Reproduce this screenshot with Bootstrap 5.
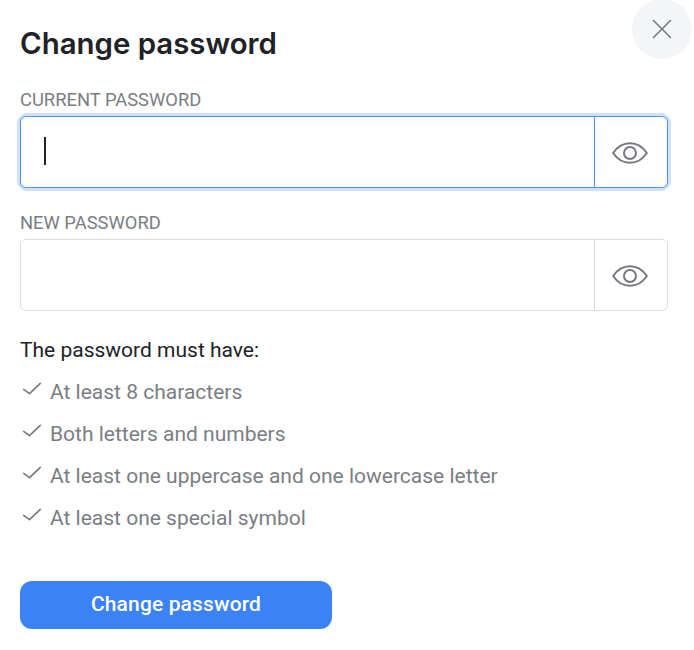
<!DOCTYPE html>
<html lang="en">
<head>
<meta charset="utf-8">
<title>Change password</title>
<link href="https://cdn.jsdelivr.net/npm/bootstrap@5.3.0/dist/css/bootstrap.min.css" rel="stylesheet">
<style>
html, body { height: 100%; }
body { background: #fff; font-family: Roboto, "Liberation Sans", sans-serif; color: #212226; overflow: hidden; }
.sheet { padding: 26px 26px 0 20px; }
.sheet-title { font-family: Inter, Roboto, sans-serif; font-weight: 600; font-size: 29.4px; line-height: 36px; margin: 0 0 28px; color: #212226; }
.close-disc { position: absolute; top: -1px; left: 632px; width: 60px; height: 60px; border-radius: 50%; background: #f4f5f7; border: 0; display: flex; align-items: center; justify-content: center; padding: 0; }
.field-label { display: block; font-size: 18.375px; line-height: 20px; color: #7b7d84; margin: 0 0 6px; text-transform: uppercase; }
.pw-group { height: 72px; margin-bottom: 25px; position: relative; }
.pw-group .form-control { border-color: #d8dadd; border-radius: 6px 0 0 6px; box-shadow: none; }
.pw-group .eye-btn { width: 74px; background: #fff; border: 1px solid #d8dadd; border-radius: 0 6px 6px 0; display: flex; align-items: center; justify-content: center; padding: 2px 3px 0 0; margin-left: -1px; }
.pw-active { border-radius: 7px; box-shadow: 0 0 0 3px #cfe2fd; }
.pw-active .form-control, .pw-active .eye-btn { border-color: #4c8ff5; }
.fake-caret { position: absolute; left: 25px; top: 21px; width: 2px; height: 28px; background: #212226; z-index: 6; }
.rules-head { font-size: 21px; line-height: 24px; padding-top: 2px; margin: 0 0 9px; color: #212226; }
.rule-list { margin: 0 0 42px; padding: 0; list-style: none; }
.rule-list li { height: 42px; display: flex; align-items: center; gap: 8px; color: #7b7d84; }
.rule-list svg { flex: none; margin-top: -6px; }
.rule-text { font-size: 21px; line-height: 24px; }
.submit-btn { width: 312px; height: 48px; background: #3b82f6; border: 0; border-radius: 12px; color: #fff; font-size: 21px; font-weight: 500; letter-spacing: .13px; padding: 0; }
</style>
</head>
<body>
<div class="sheet position-relative">
  <button class="close-disc" type="button" aria-label="Close">
    <svg width="20" height="20" viewBox="0 0 20 20" fill="none" stroke="#77787f" stroke-width="1.6" stroke-linecap="round"><path d="M1.500 1.500 18.500 18.500M18.500 1.500 1.500 18.500"/></svg>
  </button>
  <h1 class="sheet-title">Change password</h1>
  <form>
    <label class="field-label" for="cur">Current password</label>
    <div class="input-group pw-group pw-active">
      <input id="cur" type="password" class="form-control">
      <span class="fake-caret"></span>
      <button class="eye-btn" type="button" aria-label="Show password">
        <svg width="36" height="22" viewBox="0 0 36 22" fill="none" stroke="#77787f" stroke-width="2"><path d="M1.200 11C5.500 4.500 11.500 1.200 18 1.200S30.500 4.500 34.800 11C30.500 17.500 24.500 20.800 18 20.800S5.500 17.500 1.200 11Z"/><circle cx="18" cy="11" r="6"/></svg>
      </button>
    </div>
    <label class="field-label" for="new">New password</label>
    <div class="input-group pw-group">
      <input id="new" type="password" class="form-control">
      <button class="eye-btn" type="button" aria-label="Show password">
        <svg width="36" height="22" viewBox="0 0 36 22" fill="none" stroke="#77787f" stroke-width="2"><path d="M1.200 11C5.500 4.500 11.500 1.200 18 1.200S30.500 4.500 34.800 11C30.500 17.500 24.500 20.800 18 20.800S5.500 17.500 1.200 11Z"/><circle cx="18" cy="11" r="6"/></svg>
      </button>
    </div>
    <p class="rules-head">The password must have:</p>
    <ul class="rule-list">
      <li><svg width="22" height="14" viewBox="0 0 22 14" fill="none" stroke="#77787f" stroke-width="1.600" stroke-linecap="round" stroke-linejoin="round"><path d="M3.700 7.300 9.500 11.700 20.300 1.300"/></svg><span class="rule-text">At least 8 characters</span></li>
      <li><svg width="22" height="14" viewBox="0 0 22 14" fill="none" stroke="#77787f" stroke-width="1.600" stroke-linecap="round" stroke-linejoin="round"><path d="M3.700 7.300 9.500 11.700 20.300 1.300"/></svg><span class="rule-text">Both letters and numbers</span></li>
      <li><svg width="22" height="14" viewBox="0 0 22 14" fill="none" stroke="#77787f" stroke-width="1.600" stroke-linecap="round" stroke-linejoin="round"><path d="M3.700 7.300 9.500 11.700 20.300 1.300"/></svg><span class="rule-text">At least one uppercase and one lowercase letter</span></li>
      <li><svg width="22" height="14" viewBox="0 0 22 14" fill="none" stroke="#77787f" stroke-width="1.600" stroke-linecap="round" stroke-linejoin="round"><path d="M3.700 7.300 9.500 11.700 20.300 1.300"/></svg><span class="rule-text">At least one special symbol</span></li>
    </ul>
    <button class="btn submit-btn" type="button">Change password</button>
  </form>
</div>
<script src="https://cdn.jsdelivr.net/npm/bootstrap@5.3.0/dist/js/bootstrap.bundle.min.js"></script>
</body>
</html>
